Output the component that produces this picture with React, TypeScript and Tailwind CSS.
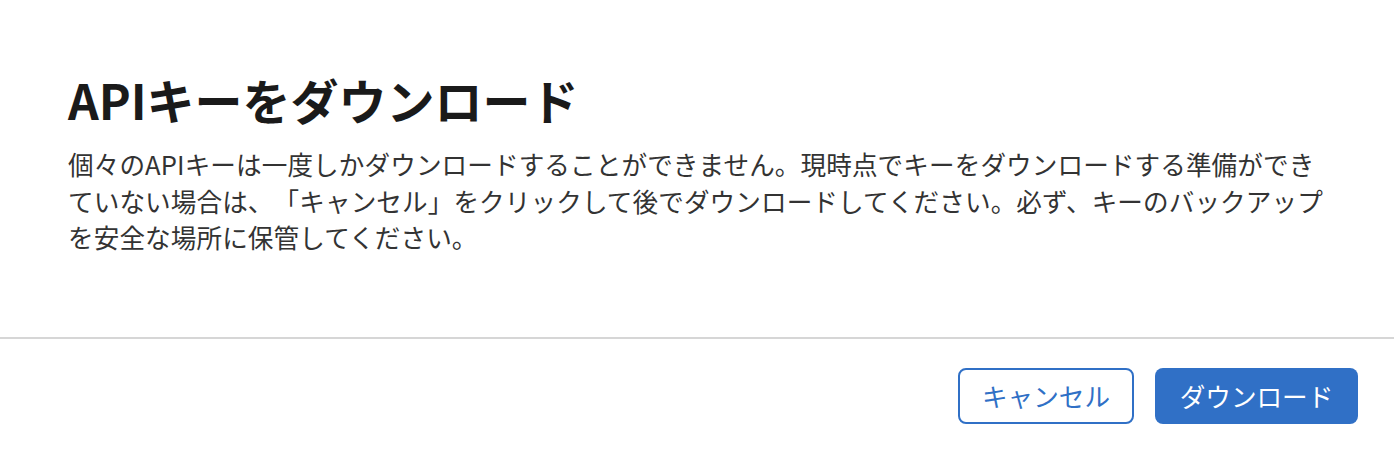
import React from "react";

export default function App() {
  const font = { fontFamily: '"Noto Sans CJK JP", "Noto Sans", sans-serif' };
  return (
    <div className="w-[1394px] h-[450px] bg-white flex flex-col [text-spacing-trim:space-all]" style={font}>
      <div className="flex-1 px-[68px] pt-[68px]">
        <h1 className="text-[48px] leading-[62px] font-bold text-[#1a1a1a]">
          APIキーをダウンロード
        </h1>
        <p className="mt-[16px] text-[25.6px] leading-[36.5px] text-[#333333] tracking-[0.1px]">
          個々のAPIキーは一度しかダウンロードすることができません。現時点でキーをダウンロードする準備ができていない場合は、「キャンセル」をクリックして後でダウンロードしてください。必ず、キーのバックアップを安全な場所に保管してください。
        </p>
      </div>
      <div className="border-t-2 border-[#d6d6d6] flex justify-end gap-[21px] pt-[29px] pb-[26px] pr-[36px]">
        <button className="w-[176px] h-[56px] rounded-[8px] border-2 border-[#3070c6] text-[#3070c6] bg-white text-[25.6px]">
          キャンセル
        </button>
        <button className="w-[203px] h-[56px] rounded-[8px] bg-[#3070c6] text-white text-[25.6px]">
          ダウンロード
        </button>
      </div>
    </div>
  );
}
